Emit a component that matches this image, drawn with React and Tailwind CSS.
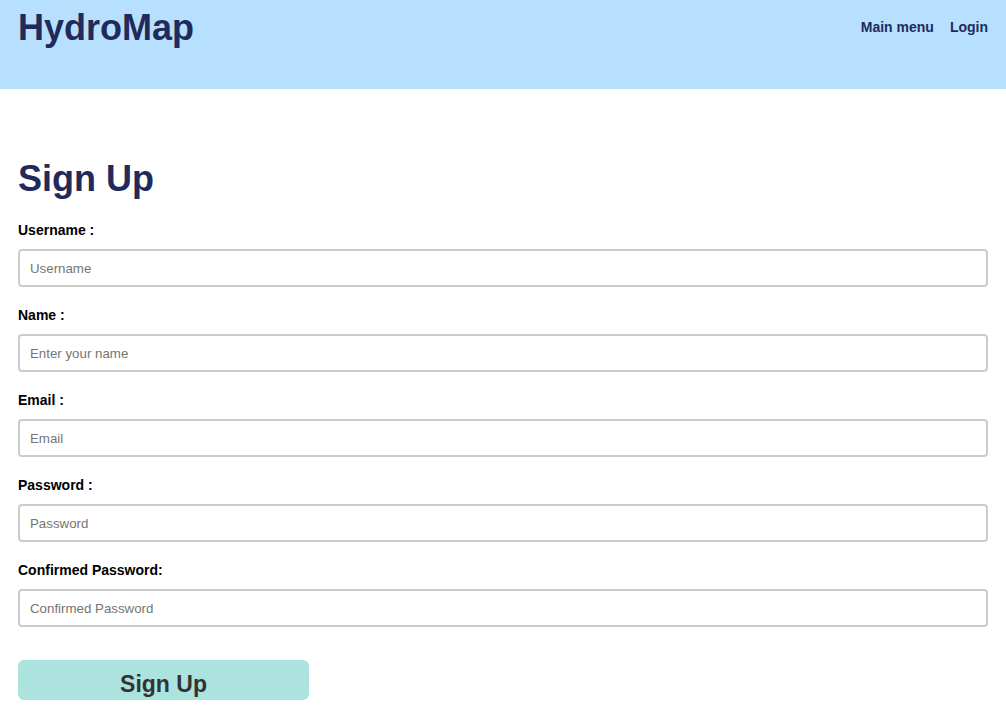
const fields = [
    { label: 'Username :', placeholder: 'Username', type: 'text' },
    { label: 'Name :', placeholder: 'Enter your name', type: 'text' },
    { label: 'Email :', placeholder: 'Email', type: 'email' },
    { label: 'Password :', placeholder: 'Password', type: 'password' },
    { label: 'Confirmed Password:', placeholder: 'Confirmed Password', type: 'password' },
];

export default function App() {
    return (
        <div className="min-h-screen bg-white font-['Liberation_Sans',Arial,sans-serif]">
            {/* Header */}
            <header className="h-[89px] bg-[#b6e0fe] px-[18px] flex items-start justify-between">
                <h1 className="text-[36px] font-bold text-[#222a5c] leading-none mt-[10px]">HydroMap</h1>
                <nav className="flex gap-4 mt-[17px] text-[14px] font-bold text-[#222a5c]">
                    <a href="#">Main menu</a>
                    <a href="#">Login</a>
                </nav>
            </header>

            {/* Form */}
            <main className="px-[18px] pt-[72px]">
                <h2 className="text-[36px] font-bold text-[#222a5c] leading-none mb-[26px]">Sign Up</h2>
                <form className="flex flex-col" onSubmit={e => e.preventDefault()}>
                    {fields.map(f => (
                        <div key={f.label} className="flex flex-col mb-[21px]">
                            <label className="text-[14px] font-bold text-black leading-none mb-[12px]">{f.label}</label>
                            <input
                                type={f.type}
                                placeholder={f.placeholder}
                                className="h-[38px] w-full border-2 border-[#cccccc] rounded-[4px] px-[10px] text-[13.3px] placeholder:text-[#757575] outline-none"
                            />
                        </div>
                    ))}
                    <button
                        type="submit"
                        className="mt-[12px] w-[291px] h-[40px] bg-[#ade3df] rounded-[6px] text-[23px] font-bold text-[#333333] leading-none pt-[8px]"
                    >
                        Sign Up
                    </button>
                </form>
            </main>
        </div>
    );
}
